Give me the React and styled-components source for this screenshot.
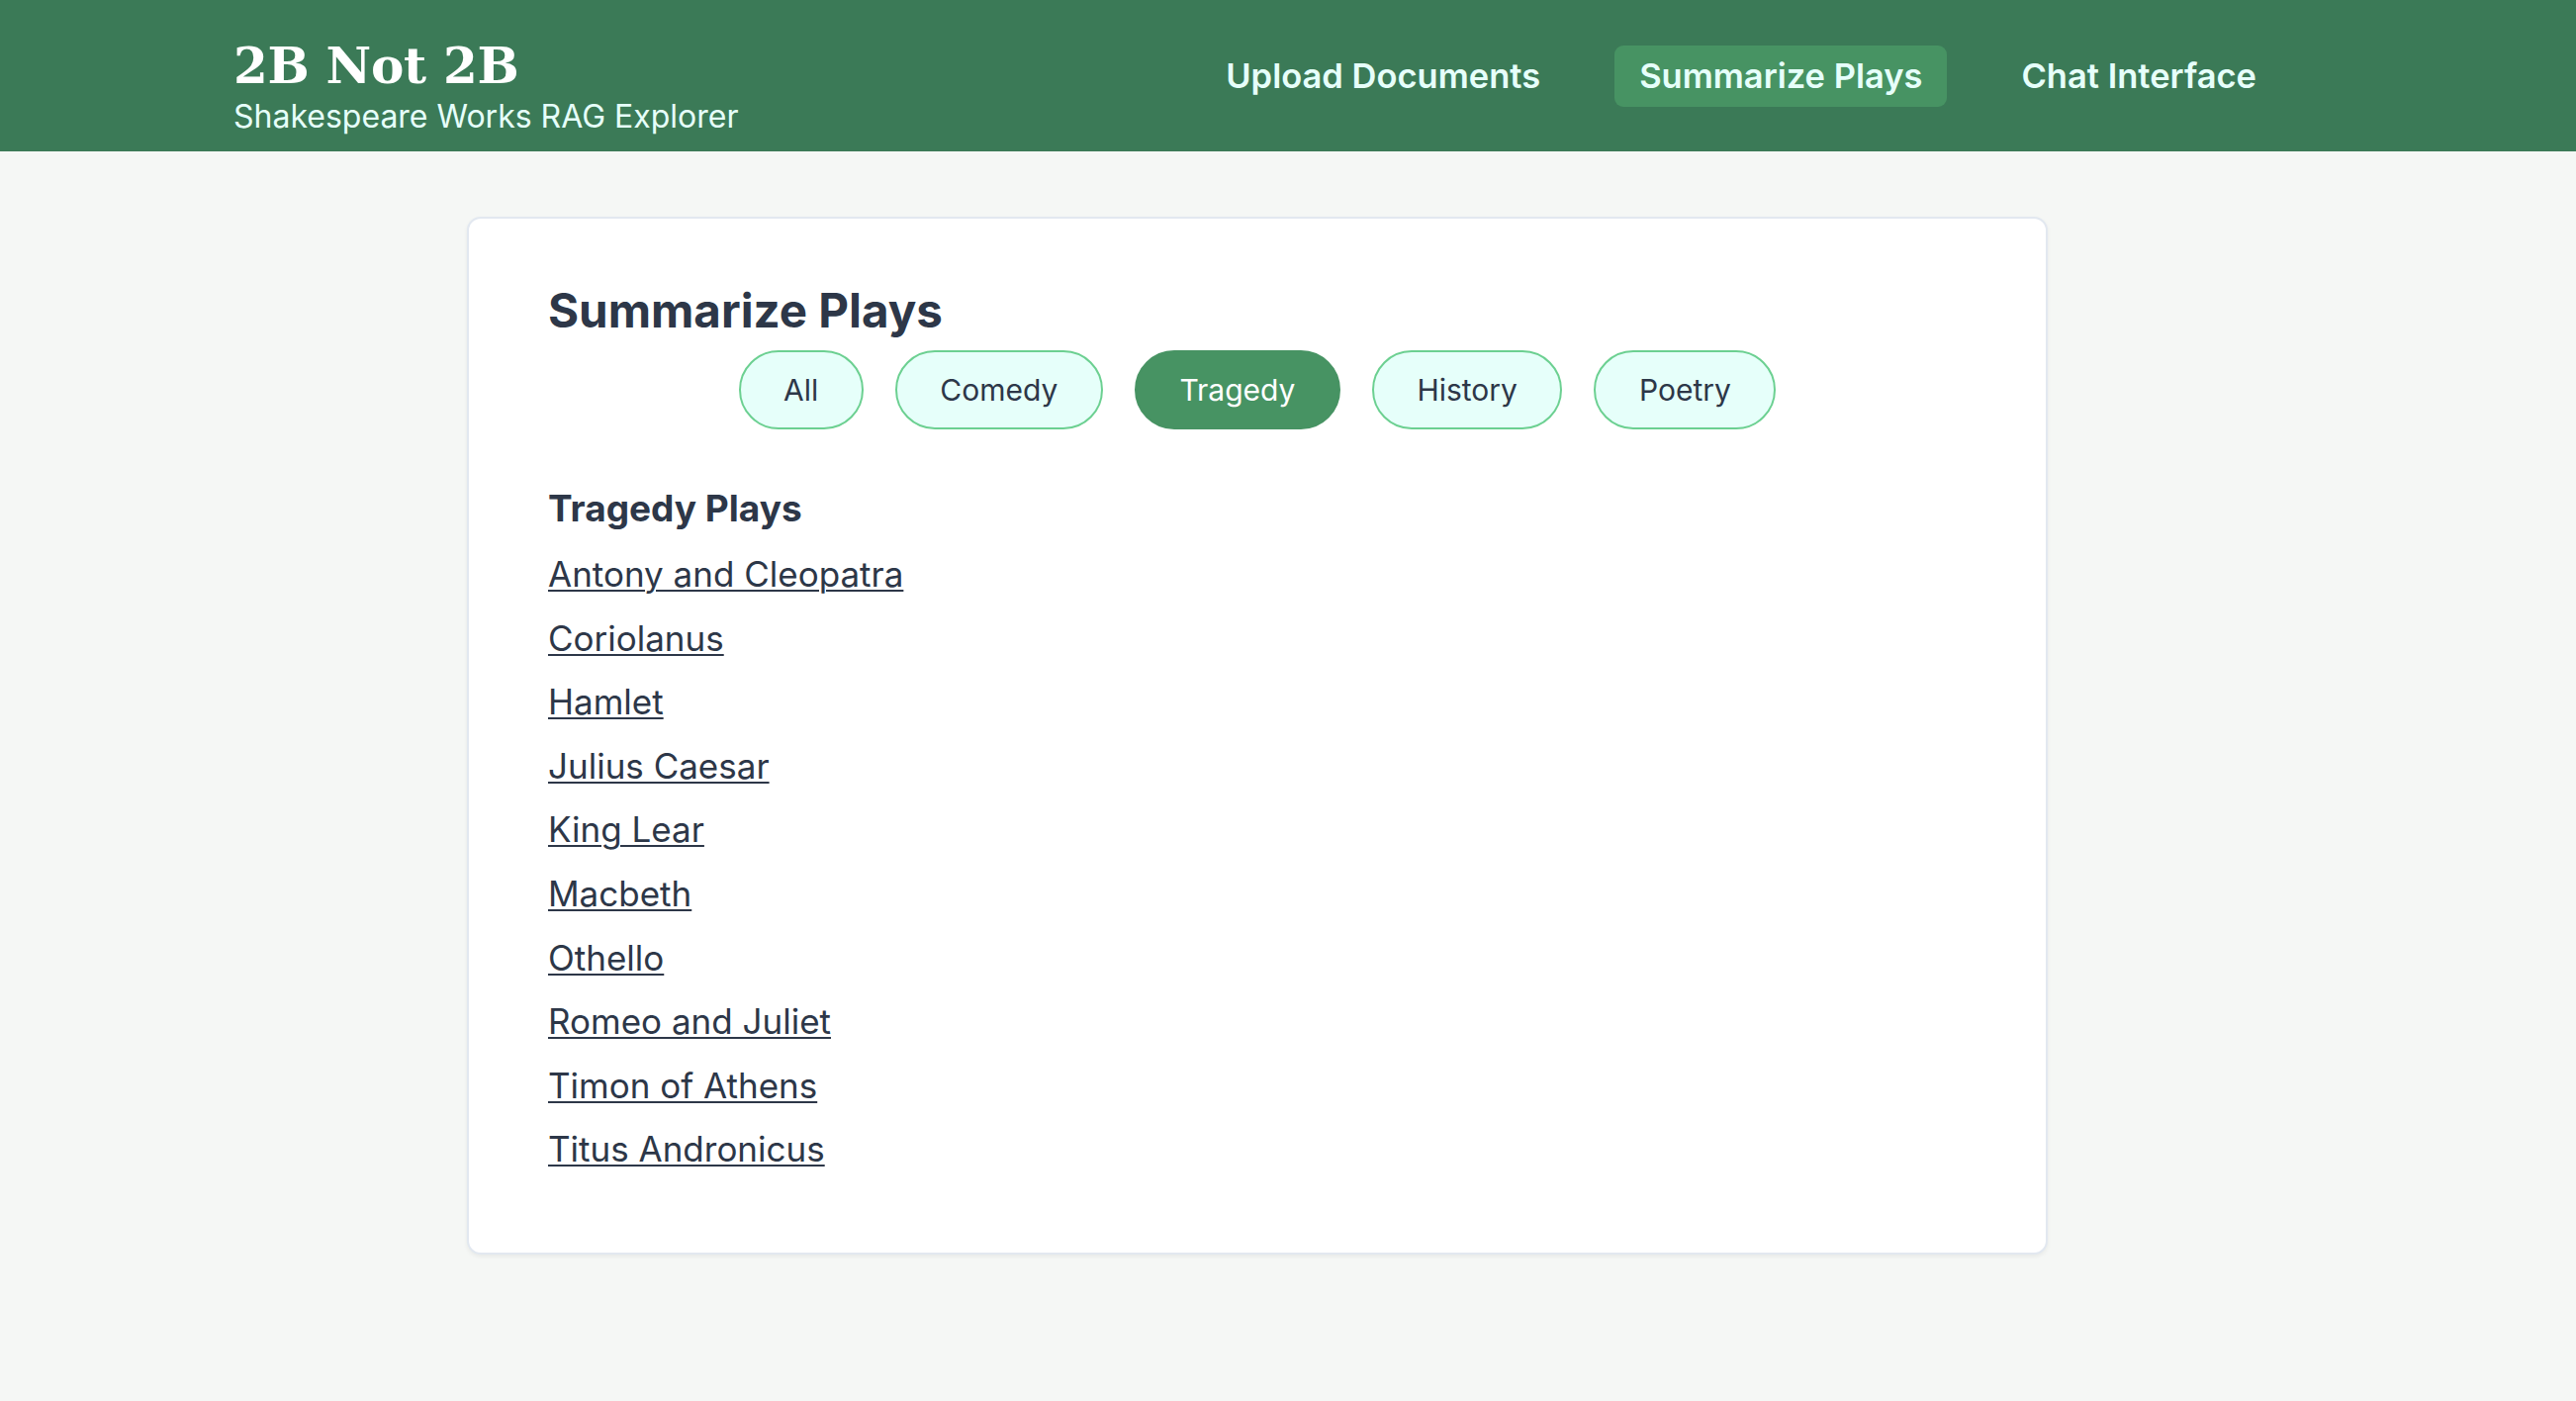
import React, { useState } from "react";
import styled, { createGlobalStyle } from "styled-components";

const GlobalStyle = createGlobalStyle`
  html, body {
    margin: 0;
    padding: 0;
    background: #f5f7f5;
    font-family: Inter, "Noto Sans", "Liberation Sans", sans-serif;
    color: #2d3748;
  }
  * { box-sizing: border-box; }
`;

const Page = styled.div`
  min-height: 1416px;
  background: #f5f7f5;
`;

const Header = styled.header`
  background: #3b7a57;
  height: 153px;
`;

const Container = styled.div`
  width: 2070px;
  margin-left: 236px;
`;

const HeaderInner = styled(Container)`
  height: 100%;
  display: flex;
  align-items: center;
  justify-content: space-between;
`;

const Brand = styled.div`
  align-self: flex-start;
  display: flex;
  flex-direction: column;
  padding-top: 37px;
`;

const Logo = styled.h1`
  margin: 0;
  font-family: "DejaVu Serif", "Liberation Serif", serif;
  font-weight: 700;
  font-size: 50px;
  line-height: 60px;
  color: #ffffff;
  letter-spacing: -0.3px;
`;

const Tagline = styled.p`
  margin: 2px 0 0;
  font-size: 32px;
  line-height: 38px;
  color: #e6fffa;
`;

const Nav = styled.nav`
  display: flex;
  align-items: center;
  gap: 50px;
`;

const NavButton = styled.button`
  border: none;
  border-radius: 9px;
  padding: 12px 25px;
  font-family: Inter, "Noto Sans", sans-serif;
  font-size: 34.5px;
  line-height: 38px;
  font-weight: 600;
  color: #e6fffa;
  background: ${(p) => (p.$active ? "#479363" : "transparent")};
  cursor: pointer;
`;

const Main = styled(Container)`
  padding-top: 66px;
  display: flex;
  justify-content: center;
`;

const Card = styled.section`
  width: 1598px;
  background: #ffffff;
  border: 2px solid #e2e8f0;
  border-radius: 14px;
  box-shadow: 0 2px 4px rgba(0, 0, 0, 0.06);
  padding: 65px 80px 85px;
`;

const Title = styled.h2`
  margin: 0;
  font-size: 47.5px;
  line-height: 56px;
  font-weight: 700;
  color: #2d3748;
`;

const Filters = styled.div`
  display: flex;
  justify-content: center;
  gap: 32px;
  margin-top: 12px;
`;

const Pill = styled.button`
  border: 2px solid ${(p) => (p.$active ? "#479363" : "#6cd091")};
  background: ${(p) => (p.$active ? "#479363" : "#e6fffa")};
  color: ${(p) => (p.$active ? "#ffffff" : "#2d3748")};
  border-radius: 999px;
  padding: 20px 43.5px;
  font-family: Inter, "Noto Sans", sans-serif;
  font-size: 30px;
  line-height: 36px;
  font-weight: 400;
  cursor: pointer;
`;

const SectionTitle = styled.h3`
  margin: 58px 0 0;
  font-size: 37px;
  line-height: 44px;
  font-weight: 700;
  color: #2d3748;
`;

const PlayList = styled.ul`
  list-style: none;
  margin: 24px 0 0;
  padding: 0;
  display: flex;
  flex-direction: column;
  gap: 24.6px;
`;

const PlayLink = styled.a`
  display: inline-block;
  font-size: 35px;
  line-height: 40px;
  color: #2d3748;
  text-decoration: underline;
  text-decoration-thickness: 2px;
  text-underline-offset: 3px;
`;

const CATEGORIES = ["All", "Comedy", "Tragedy", "History", "Poetry"];

const TRAGEDIES = [
  "Antony and Cleopatra",
  "Coriolanus",
  "Hamlet",
  "Julius Caesar",
  "King Lear",
  "Macbeth",
  "Othello",
  "Romeo and Juliet",
  "Timon of Athens",
  "Titus Andronicus",
];

export default function App() {
  const [category, setCategory] = useState("Tragedy");
  return (
    <Page>
      <GlobalStyle />
      <Header>
        <HeaderInner>
          <Brand>
            <Logo>2B Not 2B</Logo>
            <Tagline>Shakespeare Works RAG Explorer</Tagline>
          </Brand>
          <Nav>
            <NavButton>Upload Documents</NavButton>
            <NavButton $active>Summarize Plays</NavButton>
            <NavButton>Chat Interface</NavButton>
          </Nav>
        </HeaderInner>
      </Header>
      <Main>
        <Card>
          <Title>Summarize Plays</Title>
          <Filters>
            {CATEGORIES.map((c) => (
              <Pill key={c} $active={c === category} onClick={() => setCategory(c)}>
                {c}
              </Pill>
            ))}
          </Filters>
          <SectionTitle>{category} Plays</SectionTitle>
          <PlayList>
            {TRAGEDIES.map((t) => (
              <li key={t}>
                <PlayLink href="#">{t}</PlayLink>
              </li>
            ))}
          </PlayList>
        </Card>
      </Main>
    </Page>
  );
}
